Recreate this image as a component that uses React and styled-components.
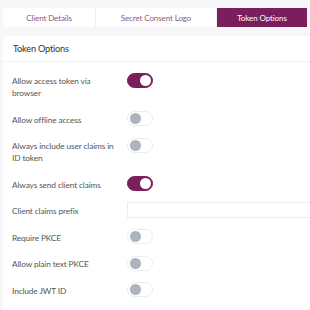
import React from "react";
import styled, { createGlobalStyle } from "styled-components";

const Global = createGlobalStyle`
  html, body { margin: 0; padding: 0; background: #f7f7fa; }
  body { font-family: Lato, "Open Sans", sans-serif; }
  * { box-sizing: border-box; }
`;

const Page = styled.div`
  width: 310px;
  height: 310px;
  overflow: hidden;
  padding: 8px 0 0 3px;
  background: #f7f7fa;
`;

const TabBar = styled.div`
  display: grid;
  grid-template-columns: 93px 121px 90px;
  height: 19px;
  background: #fff;
  width: 304px;
`;

const Tab = styled.div`
  display: flex;
  align-items: center;
  justify-content: center;
  font-size: 8px;
  letter-spacing: -0.1px;
  color: ${(p) => (p.$active ? "#fff" : "#8c5a7f")};
  background: ${(p) => (p.$active ? "#7a1f5c" : "#fff")};
  border-right: ${(p) => (p.$last ? "none" : "1px solid #efeff3")};
`;

const Card = styled.div`
  margin-top: 9px;
  background: #fff;
  height: 300px;
`;

const CardHeader = styled.div`
  height: 26px;
  padding: 0 0 0 10px;
  display: flex;
  align-items: center;
  font-size: 9.2px;
  letter-spacing: -0.2px;
  color: #333;
  border-bottom: 1px solid #f1f1f4;
`;

const Body = styled.div`
  padding: 13px 0 0 9px;
  display: flex;
  flex-direction: column;
  gap: 14.5px;
`;

const Row = styled.div`
  display: grid;
  grid-template-columns: 115px 1fr;
  align-items: start;
`;

const Label = styled.div`
  font-size: 8.3px;
  letter-spacing: -0.12px;
  line-height: 12px;
  color: #555;
  padding-right: 12px;
`;

const Switch = styled.div`
  position: relative;
  width: 26px;
  height: 15px;
  margin: -2.5px 0 -0.5px;
  border-radius: 8px;
  background: ${(p) => (p.$on ? "#7a1f5c" : "#fff")};
  border: 1px solid ${(p) => (p.$on ? "#7a1f5c" : "#ececef")};
`;

const Knob = styled.span`
  position: absolute;
  top: 1px;
  left: ${(p) => (p.$on ? "12px" : "2px")};
  width: 11px;
  height: 11px;
  border-radius: 50%;
  background: ${(p) => (p.$on ? "#fff" : "#adb3bc")};
`;

const Input = styled.div`
  height: 16px;
  margin: -3px 0 -1px;
  border: 1px solid #ececef;
  border-right: none;
  background: #fff;
`;

const rows = [
  { label: "Allow access token via browser", on: true },
  { label: "Allow offline access", on: false },
  { label: "Always include user claims in ID token", on: false },
  { label: "Always send client claims", on: true },
  { label: "Client claims prefix", input: true },
  { label: "Require PKCE", on: false },
  { label: "Allow plain text PKCE", on: false },
  { label: "Include JWT ID", on: false },
];

export default function App() {
  return (
    <>
      <Global />
      <Page>
        <TabBar>
          <Tab>Client Details</Tab>
          <Tab>Secret Consent Logo</Tab>
          <Tab $active $last>Token Options</Tab>
        </TabBar>
        <Card>
          <CardHeader>Token Options</CardHeader>
          <Body>
            {rows.map((r) => (
              <Row key={r.label}>
                <Label>{r.label}</Label>
                {r.input ? (
                  <Input />
                ) : (
                  <Switch $on={r.on}>
                    <Knob $on={r.on} />
                  </Switch>
                )}
              </Row>
            ))}
          </Body>
        </Card>
      </Page>
    </>
  );
}
